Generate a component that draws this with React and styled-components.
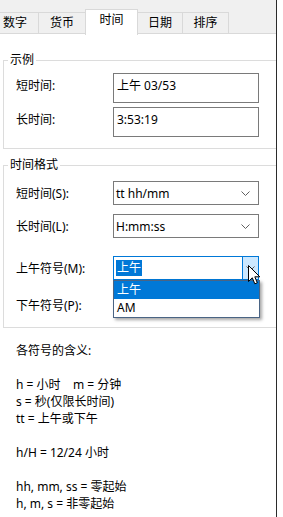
import React from "react";
import styled, { createGlobalStyle } from "styled-components";

const GlobalStyle = createGlobalStyle`
  body {
    margin: 0;
    background: #ffffff;
    font-family: "Noto Sans", "Noto Sans CJK SC", sans-serif;
    font-size: 12px;
    color: #000000;
  }
`;

const Screen = styled.div`
  display: flex;
  height: 517px;
  overflow: hidden;
`;

const Dialog = styled.div`
  width: 276px;
  display: flex;
  flex-direction: column;
  background: #f0f0f0;
  overflow: hidden;
`;

const WindowEdge = styled.div`
  width: 1px;
  background: #2b2b2b;
`;

const Desktop = styled.div`
  flex: 1;
  background: #ffffff;
`;

const TabStrip = styled.div`
  display: flex;
  align-items: flex-end;
  height: 33px;
  margin-left: -9px;
`;

const Tab = styled.div`
  box-sizing: border-box;
  width: ${(p) => p.$w}px;
  height: ${(p) => (p.$active ? 26 : 21)}px;
  margin-bottom: ${(p) => (p.$active ? -2 : 0)}px;
  margin-left: ${(p) => (p.$active ? -1 : 0)}px;
  border: 1px solid #d9d9d9;
  border-bottom: none;
  border-left: ${(p) => (p.$first || p.$active ? "1px solid #d9d9d9" : "none")};
  background: ${(p) => (p.$active ? "#ffffff" : "#f0f0f0")};
  position: ${(p) => (p.$active ? "relative" : "static")};
  z-index: ${(p) => (p.$active ? 1 : "auto")};
  text-align: center;
  line-height: 20px;
`;

const Page = styled.div`
  flex: 1;
  background: #ffffff;
  border-top: 1px solid #d9d9d9;
  padding-left: 3px;
`;

const GroupBox = styled.fieldset`
  margin: ${(p) => p.$top}px 0 0 0;
  padding: 0 0 ${(p) => p.$bottom}px 12px;
  border: 1px solid #dcdcdc;
  border-right: none;
  min-width: 0;
`;

const Legend = styled.legend`
  margin-left: -8px;
  padding: 0 2px;
  line-height: 16px;
`;

const Row = styled.div`
  display: flex;
  align-items: ${(p) => (p.$top ? "flex-start" : "center")};
  margin-top: ${(p) => p.$gap}px;
`;

const Label = styled.div`
  width: 97px;
  flex: none;
  line-height: 17px;
  padding-top: ${(p) => (p.$top ? 4 : 0)}px;
`;

const TextBox = styled.div`
  box-sizing: border-box;
  width: 146px;
  height: 30px;
  border: 1px solid #7a7a7a;
  padding: 3px 3px;
  line-height: 17px;
`;

const Combo = styled.div`
  box-sizing: border-box;
  position: relative;
  width: 146px;
  height: 24px;
  border: 1px solid ${(p) => (p.$focus ? "#0078d7" : "#7a7a7a")};
  display: flex;
  align-items: center;
  justify-content: space-between;
  padding-left: 2px;
  padding-right: ${(p) => (p.$focus ? 0 : 8)}px;
  line-height: 17px;
`;

const Selected = styled.span`
  background: #0078d7;
  color: #ffffff;
  padding: 0 1px;
  line-height: 16px;
`;

const DropButton = styled.div`
  box-sizing: border-box;
  align-self: stretch;
  width: 17px;
  margin: -1px -1px -1px 0;
  border: 1px solid #0078d7;
  background: #cce8ff;
  display: flex;
  align-items: center;
  justify-content: center;
`;

const DropList = styled.div`
  position: absolute;
  top: calc(100% + 1px);
  left: -1px;
  width: 147px;
  box-sizing: border-box;
  border: 1px solid #4a6484;
  background: #ffffff;
  box-shadow: 2px 2px 3px rgba(0, 0, 0, 0.35);
  z-index: 2;
`;

const Option = styled.div`
  height: 18px;
  line-height: 18px;
  padding-left: 3px;
  background: ${(p) => (p.$active ? "#0078d7" : "#ffffff")};
  color: ${(p) => (p.$active ? "#ffffff" : "#000000")};
`;

const Pointer = styled.svg`
  position: absolute;
  left: 134px;
  top: 8px;
  z-index: 3;
`;

const Notes = styled.div`
  margin-top: 14px;
  padding-left: 13px;
`;

const NoteLine = styled.div`
  height: 17px;
  line-height: 17px;
  white-space: pre;
`;

const Chevron = () => (
  <svg width="9" height="5" viewBox="0 0 9 5">
    <path d="M0.5 0.5 L4.5 4.5 L8.5 0.5" fill="none" stroke="#606060" strokeWidth="1" />
  </svg>
);

const tabs = [
  { text: "数字", w: 48 },
  { text: "货币", w: 47 },
  { text: "时间", w: 53, active: true },
  { text: "日期", w: 45 },
  { text: "排序", w: 46 },
];

const notes = [
  "各符号的含义:",
  "",
  "h = 小时    m = 分钟",
  "s = 秒(仅限长时间)",
  "tt = 上午或下午",
  "",
  "h/H = 12/24 小时",
  "",
  "hh, mm, ss = 零起始",
  "h, m, s = 非零起始",
];

export default function App() {
  return (
    <>
      <GlobalStyle />
      <Screen>
        <Dialog>
          <TabStrip>
            {tabs.map((t, i) => (
              <Tab key={t.text} $w={t.w} $active={t.active} $first={i === 0}>
                {t.text}
              </Tab>
            ))}
          </TabStrip>
          <Page>
            <GroupBox $top={18} $bottom={11}>
              <Legend>示例</Legend>
              <Row $top $gap={5}>
                <Label $top>短时间:</Label>
                <TextBox>上午 03/53</TextBox>
              </Row>
              <Row $top $gap={4}>
                <Label $top>长时间:</Label>
                <TextBox>3:53:19</TextBox>
              </Row>
            </GroupBox>

            <GroupBox $top={8} $bottom={10}>
              <Legend>时间格式</Legend>
              <Row $gap={8}>
                <Label>短时间(S):</Label>
                <Combo>
                  <span>tt hh/mm</span>
                  <Chevron />
                </Combo>
              </Row>
              <Row $gap={9}>
                <Label>长时间(L):</Label>
                <Combo>
                  <span>H:mm:ss</span>
                  <Chevron />
                </Combo>
              </Row>
              <Row $gap={18}>
                <Label>上午符号(M):</Label>
                <Combo $focus>
                  <Selected>上午</Selected>
                  <DropButton>
                    <Chevron />
                  </DropButton>
                  <DropList>
                    <Option $active>上午</Option>
                    <Option>AM</Option>
                  </DropList>
                  <Pointer width="13" height="21" viewBox="0 0 13 21">
                    <path
                      d="M0.5 0.5 L0.5 16.5 L4.3 12.8 L6.8 18.8 L9.3 17.8 L6.8 11.8 L11.8 11.8 Z"
                      fill="#ffffff"
                      stroke="#000000"
                      strokeWidth="1"
                      strokeLinejoin="miter"
                    />
                  </Pointer>
                </Combo>
              </Row>
              <Row $gap={13}>
                <Label>下午符号(P):</Label>
                {/* covered by the open list above */}
                <Combo />
              </Row>
            </GroupBox>

            <Notes>
              {notes.map((line, i) => (
                <NoteLine key={i}>{line}</NoteLine>
              ))}
            </Notes>
          </Page>
        </Dialog>
        <WindowEdge />
        <Desktop />
      </Screen>
    </>
  );
}
